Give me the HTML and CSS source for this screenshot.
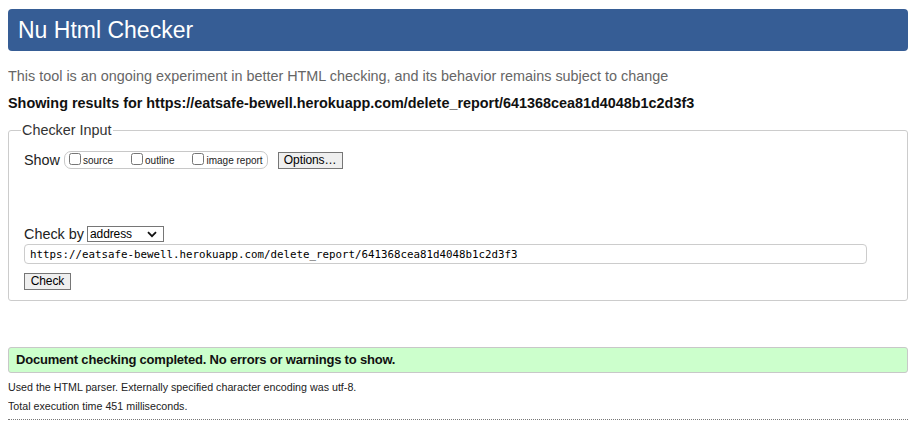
FILE: index.html
```html
<!DOCTYPE html>
<html>
<head>
<meta charset="utf-8">
<title>Nu Html Checker</title>
<link rel="stylesheet" href="styles.css">
</head>
<body>
<h1 class="title">Nu Html Checker</h1>
<p class="tagline">This tool is an ongoing experiment in better HTML checking, and its behavior remains subject to change</p>
<p class="showing">Showing results for https://eatsafe-bewell.herokuapp.com/delete_report/641368cea81d4048b1c2d3f3</p>
<form class="checker">
  <fieldset class="input-box">
    <legend class="legend">Checker Input</legend>
    <div class="show-row">
      <span class="show-label">Show</span>
      <span class="opts">
        <label class="opt"><input type="checkbox" class="cb"><span class="opt-text">source</span></label>
        <label class="opt"><input type="checkbox" class="cb"><span class="opt-text">outline</span></label>
        <label class="opt"><input type="checkbox" class="cb"><span class="opt-text">image report</span></label>
      </span>
      <button type="button" class="btn btn-options">Options…</button>
    </div>
    <div class="checkby-row">
      <span class="checkby-label">Check by</span>
      <span class="sel-wrap">
        <select class="sel"><option>address</option></select>
        <svg class="chev" width="10" height="7" viewBox="0 0 10 7"><path d="M1 1.2 L5 5.2 L9 1.2" fill="none" stroke="#111" stroke-width="1.8"/></svg>
      </span>
    </div>
    <input class="url" type="text" value="https://eatsafe-bewell.herokuapp.com/delete_report/641368cea81d4048b1c2d3f3">
    <div class="check-row"><button type="button" class="btn btn-check">Check</button></div>
  </fieldset>
</form>
<div class="success">Document checking completed. No errors or warnings to show.</div>
<p class="details details-first">Used the HTML parser. Externally specified character encoding was utf-8.</p>
<p class="details">Total execution time 451 milliseconds.</p>
<hr class="dots">
</body>
</html>
```
FILE: styles.css
```css
html, body {
  background: #fff;
}
body {
  margin: 8px 9px 8px 8px;
  font-family: "Liberation Sans", Arial, sans-serif;
  font-size: 14.4px;
  color: #000;
}
.title {
  margin: 1px 0 0;
  height: 42px;
  box-sizing: border-box;
  padding: 0 10px;
  line-height: 42px;
  background: #365d95;
  color: #fff;
  font-weight: normal;
  font-size: 23px;
  border-radius: 4px;
}
.tagline {
  margin: 17px 0 0;
  color: #666;
  font-size: 14.4px;
  line-height: 17px;
}
.showing {
  margin: 10px 0 0;
  font-weight: bold;
  font-size: 14.4px;
  line-height: 17px;
  color: #111;
}
.checker {
  margin: 10px 0 0;
}
.input-box {
  margin: 0;
  border: 1px solid #ccc;
  border-radius: 3px;
  padding: 2px 15px 11px;
}
.legend {
  padding: 0 1px;
  margin-left: -3px;
  font-size: 14.4px;
  line-height: 17px;
  color: #333;
}
.show-row {
  display: flex;
  align-items: center;
  height: 18px;
  margin-top: 10px;
}
.show-label {
  font-size: 14.4px;
  color: #222;
  margin-right: 4px;
}
.opts {
  display: inline-flex;
  align-items: flex-start;
  gap: 18px;
  box-sizing: border-box;
  border: 1px solid #c8c8c8;
  border-radius: 7px;
  height: 18px;
  padding: 0 4px 0 4px;
}
.opt {
  display: inline-flex;
  align-items: flex-start;
  color: #222;
}
.cb {
  margin: 1px 2px 0 0;
  width: 12px;
  height: 12px;
}
.opt-text {
  font-size: 10px;
  line-height: 12px;
  padding-top: 3px;
}
.btn {
  font-family: "Liberation Sans", Arial, sans-serif;
  font-size: 12px;
  letter-spacing: -0.1px;
  height: 17px;
  line-height: 15px;
  padding: 0 5px;
  background: #efefef;
  border: 1px solid #767676;
  border-radius: 0;
  color: #000;
}
.btn-options {
  margin-left: 10px;
  width: 65px;
}
.checkby-row {
  display: flex;
  align-items: center;
  margin-top: 57px;
  height: 16px;
}
.checkby-label {
  font-size: 14.4px;
  color: #222;
  margin-right: 3px;
}
.sel-wrap {
  position: relative;
  display: inline-block;
  height: 16px;
}
.sel {
  appearance: none;
  -webkit-appearance: none;
  display: block;
  box-sizing: border-box;
  font-family: "Liberation Sans", Arial, sans-serif;
  font-size: 12px;
  letter-spacing: -0.1px;
  width: 77px;
  height: 16px;
  line-height: 14px;
  padding: 0 0 0 2px;
  border: 1px solid #767676;
  border-radius: 0;
  background: #fff;
  color: #000;
}
.chev {
  position: absolute;
  right: 7px;
  top: 5px;
  pointer-events: none;
}
.url {
  display: block;
  box-sizing: border-box;
  width: 843px;
  height: 20px;
  margin-top: 2px;
  padding: 0 5px;
  border: 1px solid #ccc;
  border-radius: 4px;
  font-family: "DejaVu Sans Mono", "Liberation Mono", monospace;
  font-size: 10.8px;
  line-height: 18px;
  color: #000;
}
.check-row {
  margin-top: 8px;
  height: 17px;
}
.btn-check {
  width: 47px;
  padding: 0;
}
.success {
  margin-top: 46px;
  height: 26px;
  box-sizing: border-box;
  border: 1px solid #c8c8c8;
  border-radius: 3px;
  background: #ccffcc;
  padding: 0 7px;
  line-height: 24px;
  font-weight: bold;
  font-size: 13px;
  letter-spacing: -0.2px;
  color: #111;
}
.details {
  margin: 6px 0 0;
  font-size: 10.7px;
  line-height: 13px;
  color: #222;
}
.details-first {
  margin-top: 8px;
}
.dots {
  margin: 6px 0 0;
  border: 0;
  border-top: 1px dotted #777;
  height: 0;
}
```
